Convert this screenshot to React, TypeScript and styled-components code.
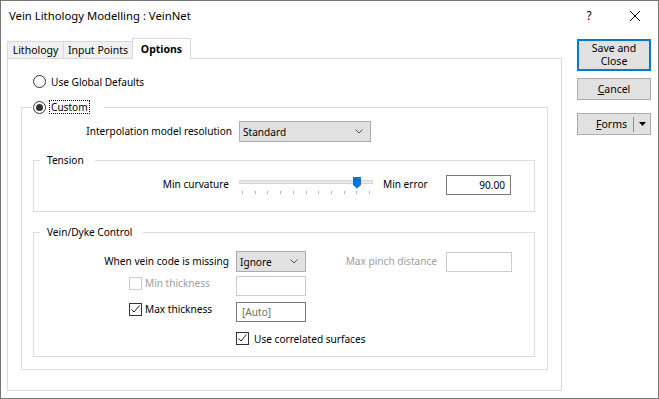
import React from "react";
import styled, { createGlobalStyle } from "styled-components";

const FONT = `"Noto Sans", "DejaVu Sans", sans-serif`;

const GlobalStyle = createGlobalStyle`
  * { box-sizing: border-box; }
  html, body { margin: 0; padding: 0; background: #fff; }
  body { font-family: ${FONT}; font-size: 10px; color: #000; }
`;

const Window = styled.div`
  width: 659px;
  height: 399px;
  border: 1px solid #747474;
  background: #fff;
  display: flex;
  flex-direction: column;
  overflow: hidden;
  font-family: ${FONT};
  font-size: 10.1px;
  line-height: 14px;
  color: #000;
`;

const TitleBar = styled.div`
  height: 30px;
  flex: none;
  display: flex;
  align-items: center;
  padding-left: 8px;
`;

const Title = styled.div`
  flex: 1;
  font-size: 11.3px;
`;

const CaptionButton = styled.div`
  width: 46px;
  height: 30px;
  display: flex;
  align-items: center;
  justify-content: center;
  font-size: 12px;
`;

const Main = styled.div`
  display: flex;
  align-items: flex-start;
  padding-left: 6px;
`;

const TabControl = styled.div`
  margin-top: 7px;
  width: 555px;
  display: flex;
  flex-direction: column;
`;

const TabStrip = styled.div`
  height: 20px;
  display: flex;
  align-items: flex-end;
`;

const Tab = styled.div<{ $active?: boolean; $w: number; $first?: boolean }>`
  width: ${(p) => p.$w}px;
  height: ${(p) => (p.$active ? 21 : 17)}px;
  margin-bottom: ${(p) => (p.$active ? -1 : 0)}px;
  margin-left: ${(p) => (p.$first ? 0 : -1)}px;
  border: 1px solid #d9d9d9;
  border-bottom: none;
  background: ${(p) => (p.$active ? "#fff" : "#f0f0f0")};
  font-weight: ${(p) => (p.$active ? 700 : 400)};
  font-size: 10.5px;
  display: flex;
  align-items: center;
  justify-content: center;
  position: relative;
  z-index: ${(p) => (p.$active ? 2 : 1)};
  padding-bottom: ${(p) => (p.$active ? 1 : 0)}px;
`;

const Panel = styled.div`
  width: 555px;
  height: 333px;
  border: 1px solid #d9d9d9;
  background: #fff;
  padding: 16px 13px 0 13px;
  display: flex;
  flex-direction: column;
`;

const RadioRow = styled.div`
  margin-left: 12px;
  height: 13px;
  display: flex;
  align-items: center;
  gap: 5px;
`;

const Group = styled.fieldset<{ $m: string; $pb: number }>`
  margin: ${(p) => p.$m};
  padding: 0 0 ${(p) => p.$pb}px 0;
  min-width: 0;
  border: 1px solid #dcdcdc;
  display: flex;
  flex-direction: column;
`;

const Legend = styled.legend<{ $ml: number; $pad: string }>`
  margin-left: ${(p) => p.$ml}px;
  padding: ${(p) => p.$pad};
  height: 14px;
  line-height: 14px;
`;

const LegendInner = styled.span`
  display: inline-flex;
  align-items: center;
  height: 14px;
  gap: 3px;
`;

const FocusText = styled.span`
  border: 1px dotted #000;
  padding: 0 1px;
  height: 14px;
  line-height: 12px;
`;

const Row = styled.div<{ $mt: number; $h: number }>`
  margin-top: ${(p) => p.$mt}px;
  height: ${(p) => p.$h}px;
  display: flex;
  align-items: center;
`;

const LabelCell = styled.div<{ $w: number; $pr?: number; $align?: string; $gray?: boolean }>`
  width: ${(p) => p.$w}px;
  padding-right: ${(p) => p.$pr ?? 0}px;
  padding-bottom: 2px;
  text-align: ${(p) => p.$align ?? "right"};
  white-space: nowrap;
  color: ${(p) => (p.$gray ? "#a0a0a0" : "#000")};
  flex: none;
`;

const CheckCell = styled.div<{ $w: number; $pl: number }>`
  width: ${(p) => p.$w}px;
  padding-left: ${(p) => p.$pl}px;
  align-self: flex-start;
  flex: none;
  display: flex;
`;

const Select = styled.div<{ $w: number }>`
  width: ${(p) => p.$w}px;
  height: 21px;
  flex: none;
  border: 1px solid #adadad;
  background: #e1e1e1;
  padding: 0 7px 0 3px;
  display: flex;
  align-items: center;
  justify-content: space-between;
`;

const TextBox = styled.div<{ $w: number; $disabled?: boolean; $right?: boolean; $muted?: boolean }>`
  width: ${(p) => p.$w}px;
  height: 20px;
  flex: none;
  border: 1px solid ${(p) => (p.$disabled ? "#cccccc" : "#7a7a7a")};
  background: #fff;
  padding: 0 5px;
  display: flex;
  align-items: center;
  justify-content: ${(p) => (p.$right ? "flex-end" : "flex-start")};
  color: ${(p) => (p.$muted ? "#6d6d6d" : "#000")};
`;

const CheckBox = styled.span<{ $disabled?: boolean }>`
  width: 13px;
  height: 13px;
  flex: none;
  border: 1px solid ${(p) => (p.$disabled ? "#cccccc" : "#333")};
  background: #fff;
  display: inline-flex;
  align-items: center;
  justify-content: center;
`;

const CheckLabel = styled.label<{ $gap: number; $gray?: boolean }>`
  display: inline-flex;
  align-items: center;
  height: 14px;
  gap: ${(p) => p.$gap}px;
  white-space: nowrap;
  color: ${(p) => (p.$gray ? "#a0a0a0" : "#000")};
`;

const SideLabel = styled.div<{ $ml: number; $w: number }>`
  margin-left: ${(p) => p.$ml}px;
  width: ${(p) => p.$w}px;
  padding-bottom: 2px;
  flex: none;
  white-space: nowrap;
`;

const ButtonColumn = styled.div`
  margin-left: 15px;
  margin-top: 8px;
  width: 74px;
  display: flex;
  flex-direction: column;
`;

const Button = styled.div<{ $mt?: number; $h: number; $focus?: boolean }>`
  margin-top: ${(p) => p.$mt ?? 0}px;
  height: ${(p) => p.$h}px;
  border: ${(p) => (p.$focus ? "2px solid #0078d7" : "1px solid #adadad")};
  background: #e1e1e1;
  display: flex;
  align-items: center;
  justify-content: center;
  text-align: center;
  line-height: 13px;
  font-size: 10.5px;
`;

const SplitLabel = styled.div`
  flex: 1;
  text-align: right;
  padding-right: 6px;
`;

const SplitDivider = styled.div`
  width: 1px;
  height: 15px;
  background: #8c8c8c;
`;

const SplitArrow = styled.div`
  width: 16px;
  display: flex;
  align-items: center;
  justify-content: center;
`;

const Chevron = () => (
  <svg width="8" height="5" viewBox="0 0 8 5">
    <polyline points="0.5,0.5 4,4 7.5,0.5" fill="none" stroke="#555" strokeWidth="1" />
  </svg>
);

const Radio = ({ checked }: { checked?: boolean }) => (
  <svg width="13" height="13" viewBox="0 0 13 13" style={{ flex: "none" }}>
    <circle cx="6.5" cy="6.5" r="6" fill="#fff" stroke="#333" strokeWidth="1" />
    {checked && <circle cx="6.5" cy="6.5" r="3.5" fill="#333" />}
  </svg>
);

const Check = ({ checked, disabled }: { checked?: boolean; disabled?: boolean }) => (
  <CheckBox $disabled={disabled}>
    {checked && (
      <svg width="11" height="11" viewBox="0 0 11 11">
        <polyline points="1.5,5.5 4,8 9.5,1.5" fill="none" stroke="#222" strokeWidth="1" />
      </svg>
    )}
  </CheckBox>
);

const Slider = () => {
  const ticks = Array.from({ length: 11 }, (_, i) => Math.round(3 + i * 12.7) + 0.5);
  return (
    <svg width="134" height="20" viewBox="0 0 134 20" style={{ flex: "none" }}>
      <rect x="0.5" y="5.5" width="133" height="3" fill="#e7eae7" stroke="#d6d6d6" />
      {ticks.map((x) => (
        <line key={x} x1={x} y1="16" x2={x} y2="19" stroke="#b5b5b5" strokeWidth="1" />
      ))}
      <path d="M114,2 h8 v8 l-4,3.5 l-4,-3.5 z" fill="#0078d7" />
    </svg>
  );
};

export default function App() {
  return (
    <>
      <GlobalStyle />
      <Window>
        <TitleBar>
          <Title>Vein Lithology Modelling : VeinNet</Title>
          <CaptionButton>?</CaptionButton>
          <CaptionButton>
            <svg width="10" height="10" viewBox="0 0 10 10">
              <line x1="0" y1="0" x2="10" y2="10" stroke="#000" strokeWidth="1" />
              <line x1="10" y1="0" x2="0" y2="10" stroke="#000" strokeWidth="1" />
            </svg>
          </CaptionButton>
        </TitleBar>
        <Main>
          <TabControl>
            <TabStrip>
              <Tab $w={57} $first>Lithology</Tab>
              <Tab $w={70}>Input Points</Tab>
              <Tab $w={59} $active>Options</Tab>
            </TabStrip>
            <Panel>
              <RadioRow>
                <Radio />
                <span>Use Global Defaults</span>
              </RadioRow>
              <Group $m="12px 0 0 0" $pb={0}>
                <Legend $ml={10} $pad="0 14px 0 1px">
                  <LegendInner>
                    <Radio checked />
                    <FocusText>Custom</FocusText>
                  </LegendInner>
                </Legend>
                <Row $mt={7} $h={21}>
                  <LabelCell $w={217} $pr={7}>Interpolation model resolution</LabelCell>
                  <Select $w={132}>
                    <span>Standard</span>
                    <Chevron />
                  </Select>
                </Row>
                <Group $m="11px 12px 0 11px" $pb={16}>
                  <Legend $ml={6} $pad="0 11px 0 7px">Tension</Legend>
                  <Row $mt={8} $h={20}>
                    <LabelCell $w={205} $pr={10}>Min curvature</LabelCell>
                    <Slider />
                    <SideLabel $ml={10} $w={63}>Min error</SideLabel>
                    <TextBox $w={65} $right>90.00</TextBox>
                  </Row>
                </Group>
                <Group $m="13px 12px 12px 11px" $pb={11}>
                  <Legend $ml={6} $pad="0 11px 0 7px">Vein/Dyke Control</Legend>
                  <Row $mt={12} $h={21}>
                    <LabelCell $w={202} $pr={7}>When vein code is missing</LabelCell>
                    <Select $w={70}>
                      <span>Ignore</span>
                      <Chevron />
                    </Select>
                    <LabelCell $w={140} $pr={9} $gray>Max pinch distance</LabelCell>
                    <TextBox $w={66} $disabled />
                  </Row>
                  <Row $mt={4} $h={20}>
                    <CheckCell $w={202} $pl={95}>
                      <CheckLabel $gap={3} $gray>
                        <Check disabled />
                        Min thickness
                      </CheckLabel>
                    </CheckCell>
                    <TextBox $w={70} $disabled />
                  </Row>
                  <Row $mt={6} $h={20}>
                    <CheckCell $w={202} $pl={95}>
                      <CheckLabel $gap={3}>
                        <Check checked />
                        Max thickness
                      </CheckLabel>
                    </CheckCell>
                    <TextBox $w={70} $muted>[Auto]</TextBox>
                  </Row>
                  <Row $mt={10} $h={13}>
                    <CheckCell $w={202} $pl={0} />
                    <CheckLabel $gap={5}>
                      <Check checked />
                      Use correlated surfaces
                    </CheckLabel>
                  </Row>
                </Group>
              </Group>
            </Panel>
          </TabControl>
          <ButtonColumn>
            <Button $h={32} $focus>
              Save and
              <br />
              Close
            </Button>
            <Button $mt={7} $h={22}>
              <span>
                <u>C</u>ancel
              </span>
            </Button>
            <Button $mt={13} $h={22}>
              <SplitLabel>
                <u>F</u>orms
              </SplitLabel>
              <SplitDivider />
              <SplitArrow>
                <svg width="7" height="4" viewBox="0 0 7 4">
                  <polygon points="0,0 7,0 3.5,4" fill="#000" />
                </svg>
              </SplitArrow>
            </Button>
          </ButtonColumn>
        </Main>
      </Window>
    </>
  );
}
